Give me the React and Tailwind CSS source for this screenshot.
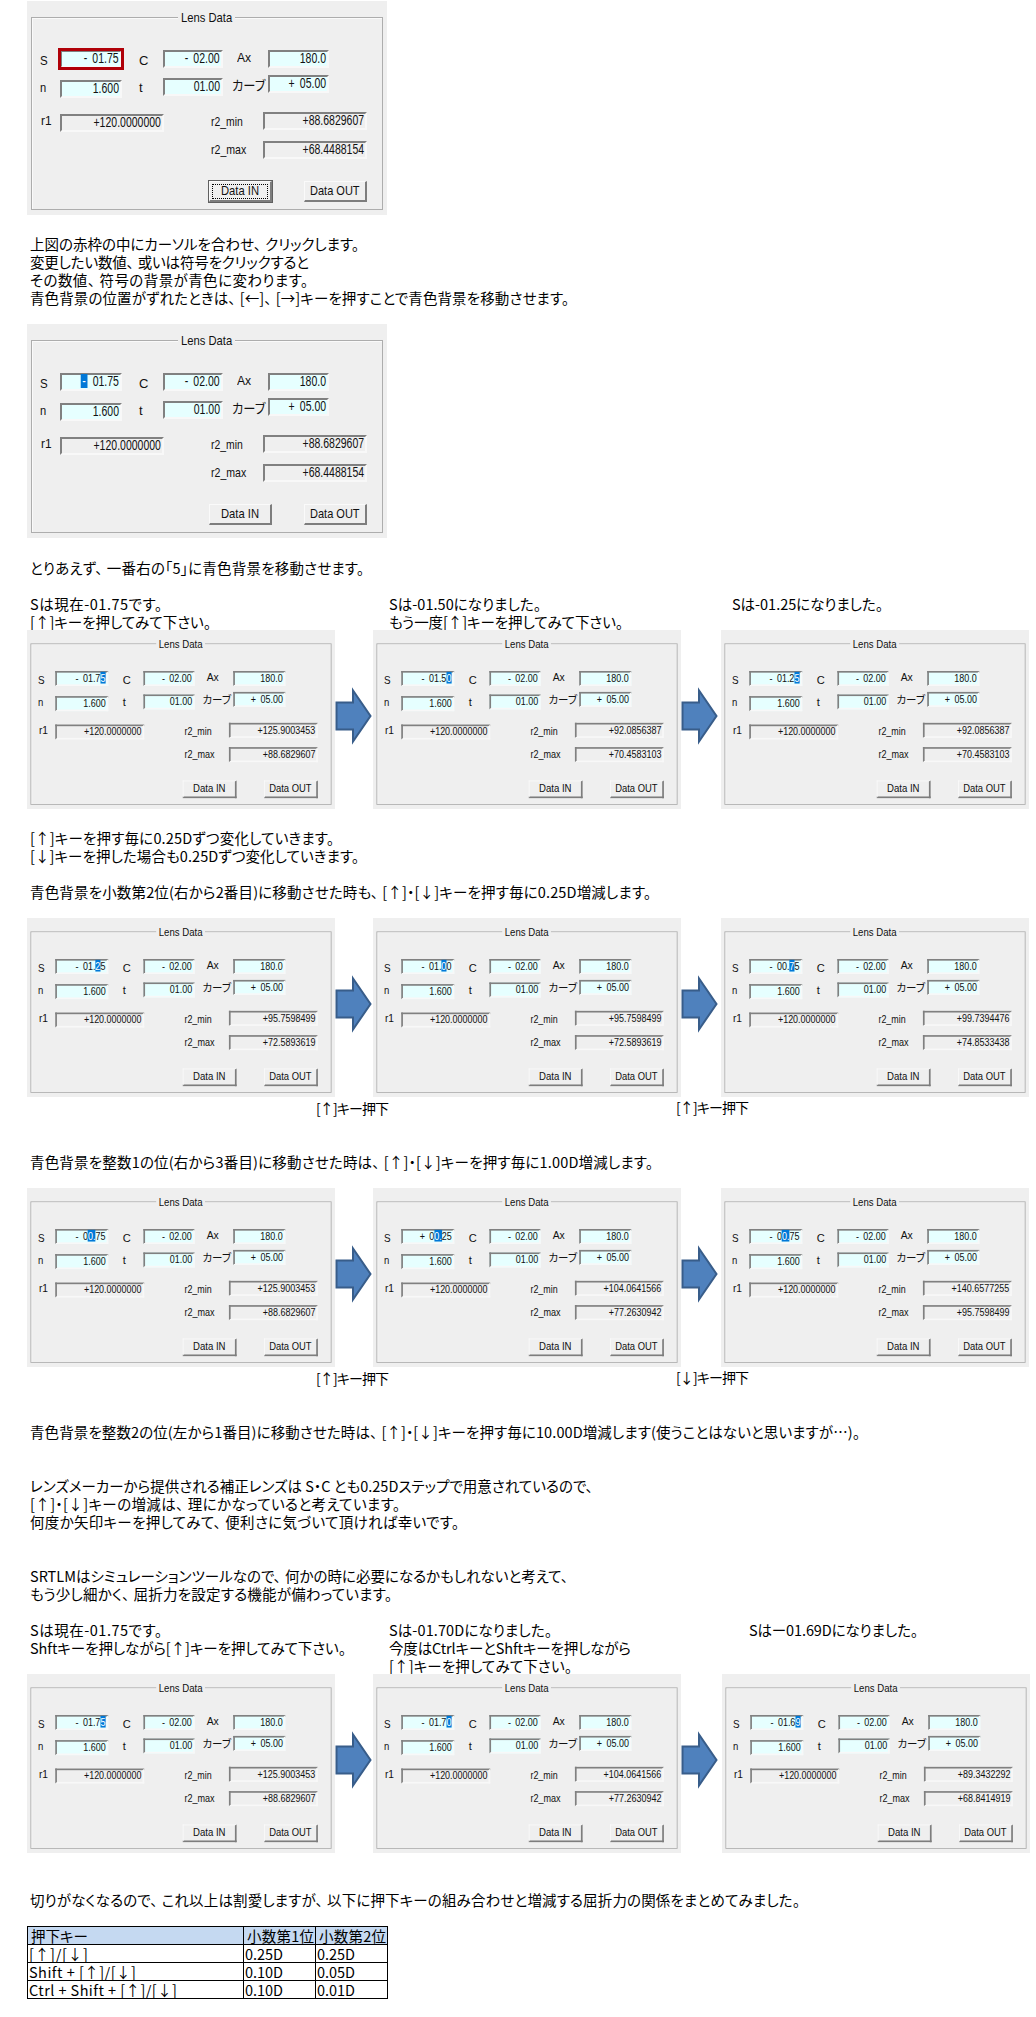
import { useLayoutEffect, useRef } from "react";

// Spreadsheet text: tracking is adjusted so the line fills the given width.
function Txt({ w, children, className = "" }) {
  const ref = useRef(null);
  useLayoutEffect(() => {
    const el = ref.current;
    el.style.letterSpacing = "0px";
    const n = Math.max(1, el.textContent.length - 1);
    const natural = el.getBoundingClientRect().width;
    el.style.letterSpacing = (w - natural) / n + "px";
  }, [w, children]);
  return (
    <span ref={ref} className={"inline-block font-['Noto_Sans_CJK_JP',sans-serif] whitespace-pre " + className}>
      {children.split(/(、)/).map((part, i) =>
        part === "、" ? <span key={i} className="pr-[4px]">、</span> : part
      )}
    </span>
  );
}

// Dialog text: glyphs are condensed horizontally to the given width.
function Label({ w, children }) {
  const ref = useRef(null);
  useLayoutEffect(() => {
    const el = ref.current;
    el.style.transform = "none";
    el.style.transform = `scaleX(${w / el.offsetWidth})`;
  }, [w, children]);
  return (
    <span className="-mt-px block h-4 text-[13px] leading-4 whitespace-pre" style={{ width: w }}>
      <span ref={ref} className="inline-block origin-left">{children}</span>
    </span>
  );
}

function Row({ children, className = "" }) {
  return <div className={"flex h-[18px] items-start pl-[30px] leading-[19px] " + className}>{children}</div>;
}

function Field({ value, sel, className = "", gray, red }) {
  let body = value;
  if (sel) {
    const [a, b] = sel;
    body = (
      <>
        {value.slice(0, a)}
        <span className={"inline-block bg-[#0078d7] text-center leading-[14px] text-white " + (a === 0 ? "w-[9px]" : "")}>{value.slice(a, b)}</span>
        {value.slice(b)}
      </>
    );
  }
  return (
    <div
      className={
        "flex h-[18px] shrink-0 items-center justify-end border-2 border-t-[#808080] border-l-[#808080] border-r-[#f8f8f8] border-b-[#f8f8f8] pr-px " +
        (gray ? "bg-[#efefef] " : "bg-[#e6ffff] ") +
        (red ? "outline-[3px] outline-[#b00008] -outline-offset-1 " : "") +
        className
      }
    >
      <span className="mb-[2px] origin-right scale-x-[.75] text-[14px] leading-[14px] [word-spacing:3px] whitespace-pre">{body}</span>
    </div>
  );
}

function Btn({ children, w, focus }) {
  return (
    <div
      className={
        "flex h-[21px] w-[63px] items-center justify-center border border-t-[#fafafa] border-l-[#fafafa] border-r-2 border-b-2 border-r-[#7d7d7d] border-b-[#7d7d7d] " +
        (focus ? "outline outline-[#606060]" : "")
      }
    >
      <div className={"flex h-[15px] w-[56px] items-center justify-center " + (focus ? "border border-dotted border-black" : "")}>
        <Label w={w}>{children}</Label>
      </div>
    </div>
  );
}

function Dialog({ s = "- 01.75", sel, min, max, red, focus }) {
  return (
    <div className="h-[214px] w-[360px] bg-[#efefef] pt-4 pl-1 font-['Liberation_Sans','Noto_Sans_CJK_JP',sans-serif] text-[#111]">
      <div className="h-[193px] w-[352px] border border-[#adadad] shadow-[inset_1px_1px_0_#fafafa]">
        <div className="-mt-[8px] flex justify-center">
          <div className="-ml-[2px] bg-[#efefef] px-[3px] pt-px"><Label w={51}>Lens Data</Label></div>
        </div>
        <div className="mt-[23px] flex h-[25px] items-start">
          <div className="mt-[5px] ml-2 w-5"><Label w={8}>S</Label></div>
          <Field value={s} sel={sel} red={red} className="mt-px w-[62px]" />
          <div className="mt-[5px] ml-[17px] w-6"><Label w={9}>C</Label></div>
          <Field value="- 02.00" className="mt-px w-[60px]" />
          <div className="mt-[2px] ml-[14px] w-[31px]"><Label w={14}>Ax</Label></div>
          <Field value="180.0" className="mt-px w-[61px]" />
        </div>
        <div className="flex h-9 items-start">
          <div className="mt-[7px] ml-2 w-5"><Label w={6}>n</Label></div>
          <Field value="1.600" className="mt-[6px] w-[62px]" />
          <div className="mt-[7px] ml-[17px] w-6"><Label w={4}>t</Label></div>
          <Field value="01.00" className="mt-[4px] w-[60px]" />
          <div className="mt-[5px] ml-[9px] w-9"><Label w={33}>カーブ</Label></div>
          <Field value="+ 05.00" className="mt-px w-[61px]" />
        </div>
        <div className="flex h-[30px] items-start">
          <div className="mt-[4px] ml-[9px] w-[19px]"><Label w={11}>r1</Label></div>
          <Field gray value="+120.0000000" className="mt-[4px] w-[104px]" />
          <div className="mt-[5px] ml-[47px] w-[52px]"><Label w={32}>r2_min</Label></div>
          <Field gray value={min} className="mt-[2px] w-[104px]" />
        </div>
        <div className="flex h-[41px] items-start">
          <div className="mt-[3px] ml-[179px] w-[52px]"><Label w={35}>r2_max</Label></div>
          <Field gray value={max} className="mt-px w-[104px]" />
        </div>
        <div className="ml-[177px] flex gap-8">
          <Btn w={38} focus={focus}>Data IN</Btn>
          <Btn w={50}>Data OUT</Btn>
        </div>
      </div>
    </div>
  );
}

function SmallDialog(props) {
  return (
    <div className="h-[179px] w-[308px] shrink-0 overflow-hidden">
      <div className="h-[214px] w-[360px] origin-top-left scale-x-[.8556] scale-y-[.8365]">
        <Dialog {...props} />
      </div>
    </div>
  );
}

function Arrow({ className = "" }) {
  return (
    <svg className={"h-[60px] w-[38px] shrink-0 " + className} viewBox="0 0 38 60">
      <path d="M1.5 16.5H18V4.5L35.5 30L18 55.5V43.5H1.5Z" fill="#4f81bd" stroke="#385d8a" strokeWidth="2" />
    </svg>
  );
}

function Sequence({ items, className = "", gaps = "" }) {
  return (
    <div className={"flex h-[180px] items-start pl-[27px] " + className}>
      <SmallDialog {...items[0]} />
      <Arrow className="mt-[56px]" />
      <SmallDialog {...items[1]} />
      <Arrow className={"mt-[56px] " + gaps} />
      <SmallDialog {...items[2]} />
    </div>
  );
}

function KeyCaption({ second }) {
  return (
    <Row className="pl-[316px]">
      <div className="w-[360px]"><Txt w={73} className="text-[14px]">[↑]キー押下</Txt></div>
      <Txt w={73} className="text-[14px]">{second}</Txt>
    </Row>
  );
}

const seq1 = [
  { s: "- 01.75", sel: [6, 7], min: "+125.9003453", max: "+88.6829607" },
  { s: "- 01.50", sel: [6, 7], min: "+92.0856387", max: "+70.4583103" },
  { s: "- 01.25", sel: [6, 7], min: "+92.0856387", max: "+70.4583103" },
];
const seq2 = [
  { s: "- 01.25", sel: [5, 6], min: "+95.7598499", max: "+72.5893619" },
  { s: "- 01.00", sel: [5, 6], min: "+95.7598499", max: "+72.5893619" },
  { s: "- 00.75", sel: [5, 6], min: "+99.7394476", max: "+74.8533438" },
];
const seq3 = [
  { s: "- 00.75", sel: [3, 5], min: "+125.9003453", max: "+88.6829607" },
  { s: "+ 00.25", sel: [3, 5], min: "+104.0641566", max: "+77.2630942" },
  { s: "- 00.75", sel: [3, 5], min: "+140.6577255", max: "+95.7598499" },
];
const seq4 = [
  { s: "- 01.75", sel: [6, 7], min: "+125.9003453", max: "+88.6829607" },
  { s: "- 01.70", sel: [6, 7], min: "+104.0641566", max: "+77.2630942" },
  { s: "- 01.69", sel: [6, 7], min: "+89.3432292", max: "+68.8414919" },
];

const table = [
  [["[↑]/[↓]", 59], ["0.25D", 38], ["0.25D", 38]],
  [["Shift + [↑]/[↓]", 107], ["0.10D", 38], ["0.05D", 38]],
  [["Ctrl + Shift + [↑]/[↓]", 148], ["0.10D", 38], ["0.01D", 38]],
];

export default function App() {
  return (
    <div className="h-[2017px] w-[1036px] overflow-hidden bg-white pt-px font-['Noto_Sans_CJK_JP',sans-serif] text-[14.5px] text-black [font-feature-settings:'palt']">
      <div className="flex h-[233px] items-start pl-[27px]">
        <Dialog red focus min="+88.6829607" max="+68.4488154" />
      </div>
      <Row><Txt w={329}>上図の赤枠の中にカーソルを合わせ、クリックします。</Txt></Row>
      <Row><Txt w={279}>変更したい数値、或いは符号をクリックすると</Txt></Row>
      <Row><Txt w={278}>その数値、符号の背景が青色に変わります。</Txt></Row>
      <Row><Txt w={539}>青色背景の位置がずれたときは、[←]、[→]キーを押すことで青色背景を移動させます。</Txt></Row>
      <div className="flex h-[252px] items-start pt-[18px] pl-[27px]">
        <Dialog sel={[0, 1]} min="+88.6829607" max="+68.4488154" />
      </div>
      <Row><Txt w={334}>とりあえず、一番右の「5」に青色背景を移動させます。</Txt></Row>
      <Row className="mt-[18px]">
        <div className="w-[359px]"><Txt w={132}>Sは現在-01.75です。</Txt></div>
        <div className="w-[343px]"><Txt w={152}>Sは-01.50になりました。</Txt></div>
        <Txt w={151}>Sは-01.25になりました。</Txt>
      </Row>
      <Row>
        <div className="w-[359px]"><Txt w={181}>[↑]キーを押してみて下さい。</Txt></div>
        <Txt w={234}>もう一度[↑]キーを押してみて下さい。</Txt>
      </Row>
      <Sequence items={seq1} gaps="mr-[2px]" />
      <Row className="mt-[18px]"><Txt w={304}>[↑]キーを押す毎に0.25Dずつ変化していきます。</Txt></Row>
      <Row><Txt w={329}>[↓]キーを押した場合も0.25Dずつ変化していきます。</Txt></Row>
      <Row className="mt-[18px]"><Txt w={621}>青色背景を小数第2位(右から2番目)に移動させた時も、[↑]・[↓]キーを押す毎に0.25D増減します。</Txt></Row>
      <Sequence items={seq2} className="mt-[18px]" gaps="mr-[2px]" />
      <KeyCaption second="[↑]キー押下" />
      <Row className="mt-[36px]"><Txt w={623}>青色背景を整数1の位(右から3番目)に移動させた時は、[↑]・[↓]キーを押す毎に1.00D増減します。</Txt></Row>
      <Sequence items={seq3} className="mt-[18px]" gaps="mr-[2px]" />
      <KeyCaption second="[↓]キー押下" />
      <Row className="mt-[36px]"><Txt w={830}>青色背景を整数2の位(左から1番目)に移動させた時は、[↑]・[↓]キーを押す毎に10.00D増減します(使うことはないと思いますが…)。</Txt></Row>
      <Row className="mt-[36px]"><Txt w={567}>レンズメーカーから提供される補正レンズは S・C とも0.25Dステップで用意されているので、</Txt></Row>
      <Row><Txt w={370}>[↑]・[↓]キーの増減は、理にかなっていると考えています。</Txt></Row>
      <Row><Txt w={429}>何度か矢印キーを押してみて、便利さに気づいて頂ければ幸いです。</Txt></Row>
      <Row className="mt-[36px]"><Txt w={542}>SRTLMはシミュレーションツールなので、何かの時に必要になるかもしれないと考えて、</Txt></Row>
      <Row><Txt w={362}>もう少し細かく、屈折力を設定する機能が備わっています。</Txt></Row>
      <Row className="mt-[18px]">
        <div className="w-[359px]"><Txt w={132}>Sは現在-01.75です。</Txt></div>
        <div className="w-[360px]"><Txt w={163}>Sは-01.70Dになりました。</Txt></div>
        <Txt w={169}>Sはー01.69Dになりました。</Txt>
      </Row>
      <Row>
        <div className="w-[359px]"><Txt w={316}>Shftキーを押しながら[↑]キーを押してみて下さい。</Txt></div>
        <Txt w={242}>今度はCtrlキーとShftキーを押しながら</Txt>
      </Row>
      <Row className="pl-[389px]"><Txt w={183}>[↑]キーを押してみて下さい。</Txt></Row>
      <Sequence items={seq4} gaps="mr-[3px]" />
      <Row className="mt-[36px]"><Txt w={770}>切りがなくなるので、これ以上は割愛しますが、以下に押下キーの組み合わせと増減する屈折力の関係をまとめてみました。</Txt></Row>
      <div className="mt-[18px] ml-[27px] grid w-[361px] grid-cols-[216px_72px_72px] border-t border-l border-black leading-[18px]">
        {[["押下キー", 57], ["小数第1位", 67], ["小数第2位", 67]].map(([t, w]) => (
          <div key={t} className="h-[18px] border-r border-b border-black bg-[#c5d9f1] pl-[3px]"><Txt w={w}>{t}</Txt></div>
        ))}
        {table.flat().map(([t, w], i) => (
          <div key={i} className="h-[18px] border-r border-b border-black pl-px"><Txt w={w}>{t}</Txt></div>
        ))}
      </div>
    </div>
  );
}
